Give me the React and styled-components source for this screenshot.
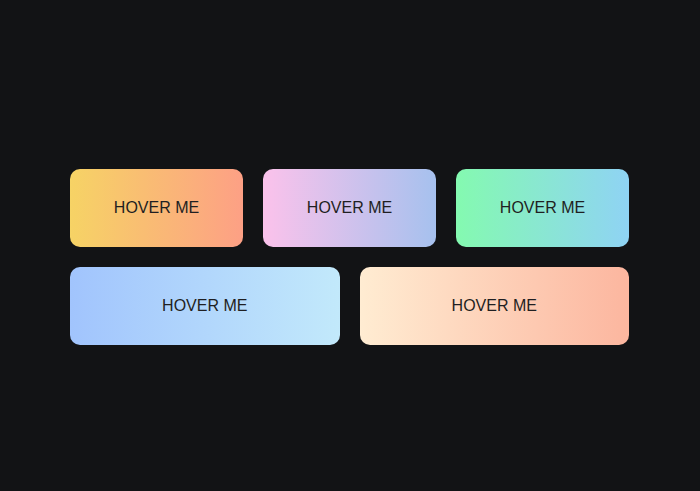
import React from "react";
import styled, { createGlobalStyle } from "styled-components";

const GlobalStyle = createGlobalStyle`
  html, body {
    margin: 0;
    padding: 0;
    background: #121315;
    font-family: "Liberation Sans", Arial, sans-serif;
  }
`;

const Page = styled.div`
  min-height: 491px;
  box-sizing: border-box;
  padding: 169px 70px 0;
`;

const Grid = styled.div`
  width: 559px;
  display: grid;
  grid-template-columns: repeat(6, 1fr);
  column-gap: 20px;
  row-gap: 20px;
`;

const HoverButton = styled.button`
  grid-column: span ${({ span }) => span};
  height: 78px;
  border: none;
  border-radius: 10px;
  background: linear-gradient(90deg, ${({ from }) => from} 0%, ${({ to }) => to} 100%);
  color: #1f1f22;
  font-family: "Liberation Sans", Arial, sans-serif;
  font-size: 16px;
  cursor: pointer;
  transition: transform 200ms ease, box-shadow 200ms ease;

  &:hover {
    transform: translateY(-3px);
    box-shadow: 0 8px 20px rgba(0, 0, 0, 0.4);
  }
`;

const buttons = [
  { from: "#f6d365", to: "#fda085", span: 2 },
  { from: "#fbc2eb", to: "#a6c1ee", span: 2 },
  { from: "#84fab0", to: "#8fd3f4", span: 2 },
  { from: "#a1c4fd", to: "#c2e9fb", span: 3 },
  { from: "#ffecd2", to: "#fcb69f", span: 3 },
];

const App = () => {
  return (
    <>
      <GlobalStyle />
      <Page>
        <Grid>
          {buttons.map((b, i) => (
            <HoverButton key={i} from={b.from} to={b.to} span={b.span}>
              HOVER ME
            </HoverButton>
          ))}
        </Grid>
      </Page>
    </>
  );
};

export default App;
